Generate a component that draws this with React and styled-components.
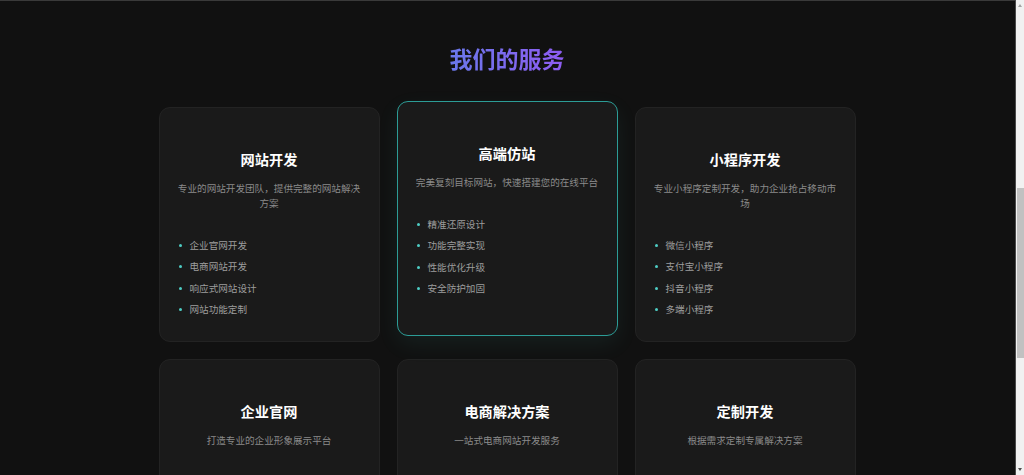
import React from 'react';
import styled, { createGlobalStyle } from 'styled-components';

const GlobalStyle = createGlobalStyle`
  html, body {
    margin: 0;
    background: #111111;
  }
  body {
    font-family: "Noto Sans CJK SC", "Noto Sans", sans-serif;
    color: #ffffff;
  }
`;

const Page = styled.div`
  border-top: 1px solid #3a3a3a;
  padding-right: 10px;
  background: #111111;
`;

// slim scroll rail pinned to the right edge of the window
const Rail = styled.div`
  position: fixed;
  top: 0;
  right: 0;
  bottom: 0;
  width: 9px;
  background: #f1f1f1;
  border-left: 1px solid #4a4a4a;
  display: flex;
  flex-direction: column;
  align-items: center;
  justify-content: space-between;
  padding: 4px 0;
  box-sizing: border-box;
`;

const Arrow = styled.span`
  width: 0;
  height: 0;
  border-left: 2.5px solid transparent;
  border-right: 2.5px solid transparent;
  ${(p) => (p.$down ? 'border-top: 3px solid #505050;' : 'border-bottom: 3px solid #a3a3a3;')}
`;

const Thumb = styled.div`
  position: absolute;
  left: 1px;
  right: 0;
  top: 188px;
  height: 170px;
  background: #c1c1c1;
`;

const Section = styled.section`
  padding: 44px 0 60px;
`;

const Heading = styled.h2`
  width: max-content;
  margin: 0 auto 34px;
  font-size: 23px;
  font-weight: 700;
  line-height: 1.2;
  background: linear-gradient(90deg, #6a78ea, #8f5cf2);
  -webkit-background-clip: text;
  background-clip: text;
  color: transparent;
`;

const Grid = styled.div`
  width: 697px;
  margin: 0 auto;
  display: grid;
  grid-template-columns: repeat(3, 1fr);
  gap: 17px 17px;
`;

const Card = styled.div`
  background: #1a1a1a;
  border: 1px solid ${(p) => (p.$active ? '#2c9c96' : '#232323')};
  border-radius: 11px;
  padding: 42px 18px 20px;
  min-height: 234px;
  box-sizing: border-box;
  transform: ${(p) => (p.$active ? 'translateY(-6px)' : 'none')};
  box-shadow: ${(p) => (p.$active ? '0 8px 22px rgba(78, 205, 196, 0.08)' : 'none')};
`;

const Title = styled.h3`
  margin: 0 0 13px;
  text-align: center;
  font-size: 14.2px;
  font-weight: 700;
  line-height: 18px;
  color: #ffffff;
`;

const Desc = styled.p`
  margin: 0 0 24px;
  text-align: center;
  font-size: 9.6px;
  line-height: 15px;
  color: #8a8a8a;
`;

const List = styled.ul`
  list-style: none;
  margin: 0;
  padding: 0;
`;

const Item = styled.li`
  display: flex;
  align-items: center;
  gap: 8px;
  padding: 3.25px 0;
  font-size: 9.6px;
  line-height: 15px;
  color: #9d9d9d;

  &::before {
    content: '';
    width: 3px;
    height: 3px;
    border-radius: 50%;
    background: #4ecdc4;
    margin-left: 1px;
  }
`;

const services = [
  {
    title: '网站开发',
    desc: '专业的网站开发团队，提供完整的网站解决方案',
    items: ['企业官网开发', '电商网站开发', '响应式网站设计', '网站功能定制'],
  },
  {
    title: '高端仿站',
    desc: '完美复刻目标网站，快速搭建您的在线平台',
    items: ['精准还原设计', '功能完整实现', '性能优化升级', '安全防护加固'],
    active: true,
  },
  {
    title: '小程序开发',
    desc: '专业小程序定制开发，助力企业抢占移动市场',
    items: ['微信小程序', '支付宝小程序', '抖音小程序', '多端小程序'],
  },
  {
    title: '企业官网',
    desc: '打造专业的企业形象展示平台',
    items: ['品牌形象设计', '响应式布局', 'SEO优化', '后台管理系统'],
  },
  {
    title: '电商解决方案',
    desc: '一站式电商网站开发服务',
    items: ['商城系统搭建', '支付接口对接', '订单管理', '数据统计分析'],
  },
  {
    title: '定制开发',
    desc: '根据需求定制专属解决方案',
    items: ['需求分析', '系统架构设计', '功能模块开发', '持续维护支持'],
  },
];

export default function App() {
  return (
    <>
      <GlobalStyle />
      <Page>
        <Section>
          <Heading>我们的服务</Heading>
          <Grid>
            {services.map((s) => (
              <Card key={s.title} $active={s.active}>
                <Title>{s.title}</Title>
                <Desc>{s.desc}</Desc>
                <List>
                  {s.items.map((item) => (
                    <Item key={item}>{item}</Item>
                  ))}
                </List>
              </Card>
            ))}
          </Grid>
        </Section>
      </Page>
      <Rail>
        <Arrow />
        <Thumb />
        <Arrow $down />
      </Rail>
    </>
  );
}
